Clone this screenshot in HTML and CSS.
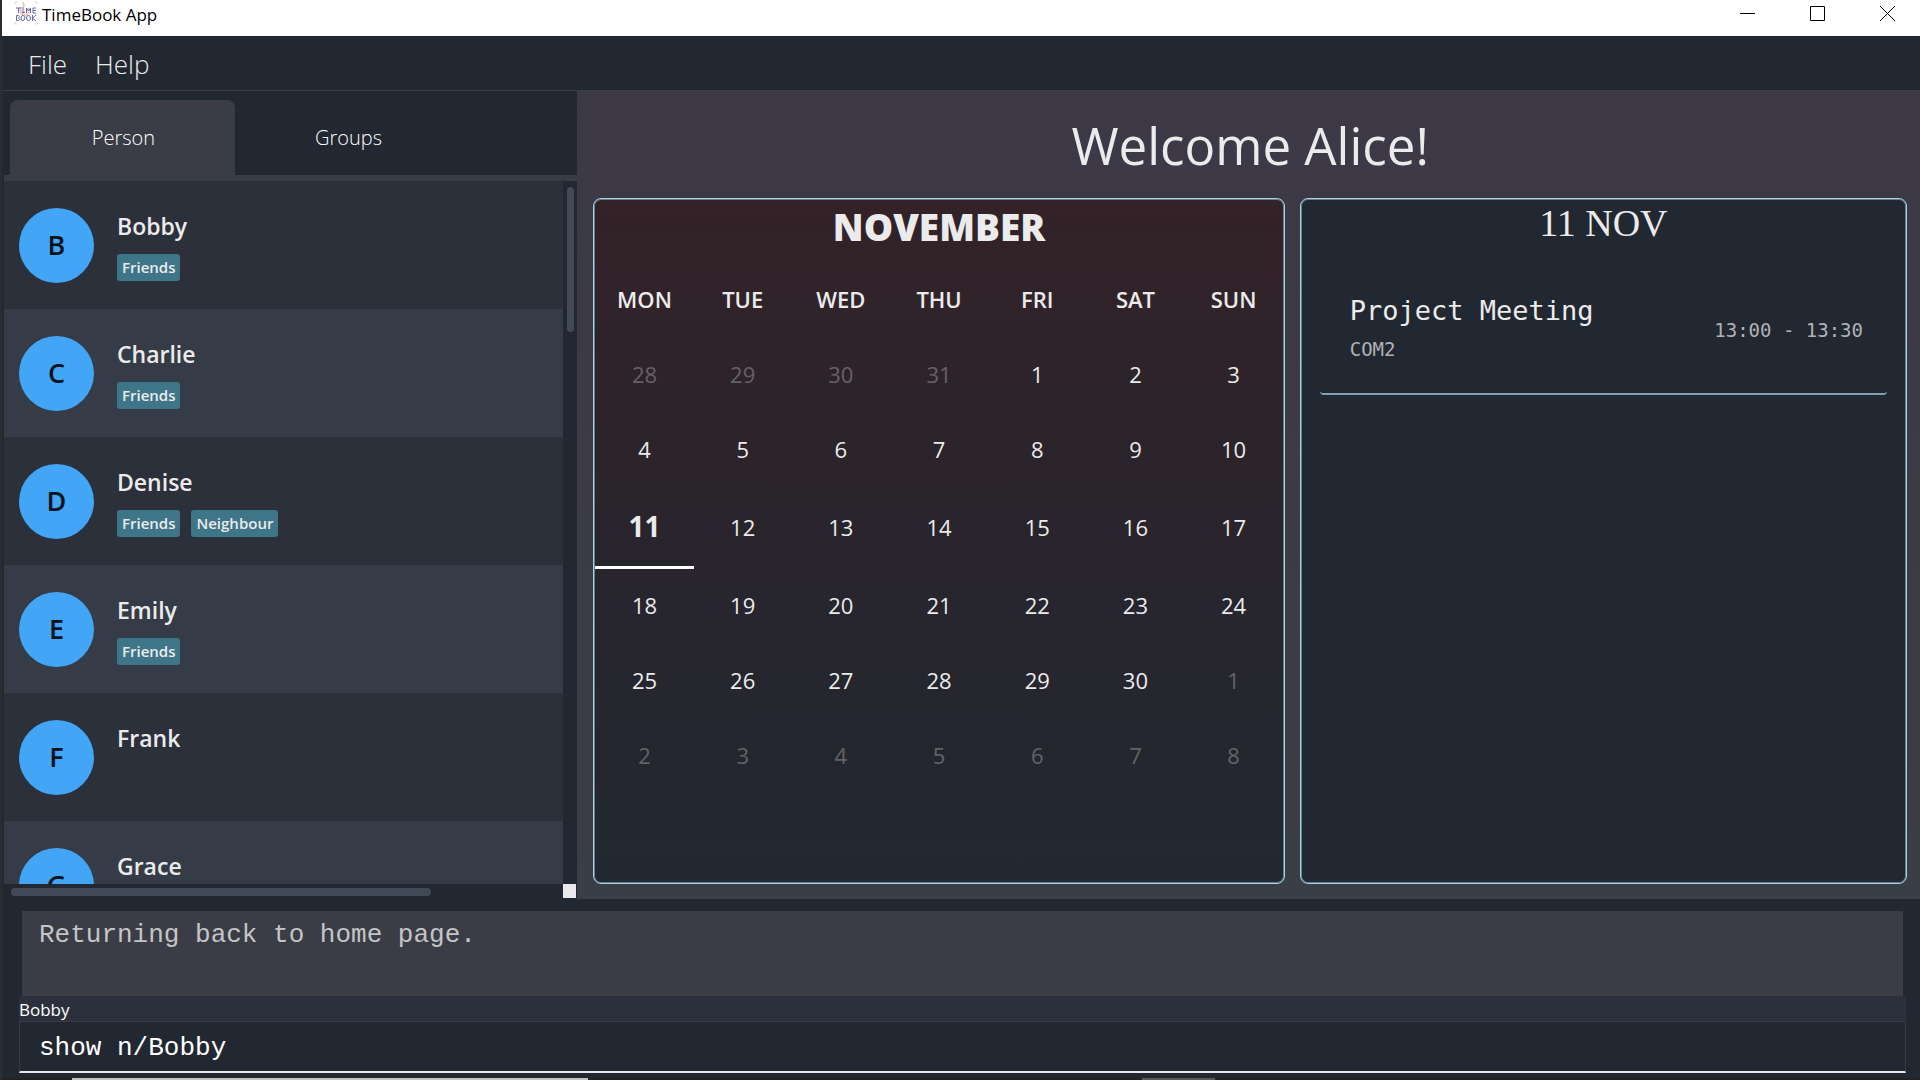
FILE: index.html
```html
<!DOCTYPE html>
<html lang="en">
<head>
<meta charset="utf-8">
<title>TimeBook App</title>
<link rel="stylesheet" href="styles.css">
</head>
<body>
<header class="titlebar">
  <svg class="logo" viewBox="0 0 24 28" width="24" height="28" aria-hidden="true">
    <path d="M1 4V2h2M21 2h2v2M1 22v2h2M21 24h2v-2" fill="none" stroke="#d4d4da"/>
    <path d="M7 7c-2 5 1 8 4 8s5-3 3-7M9 2l1 5" fill="none" stroke="#f3c9b0" stroke-width="2"/>
    <path d="M2 8h5M4.500 8v5M9 7v6M8 12.500h3M12.500 13V8l2 3 2-3v5M22 8h-3v5h3M19 10.500h3" fill="none" stroke="#6767b4"/>
    <path d="M2.500 15.500v5h2q2.500-1.200 0-2.500 1.500-1.300 0-2.500zM18.500 15v6M22 15l-3.500 3 3.500 3" fill="none" stroke="#6767b4"/>
    <ellipse cx="9" cy="18" rx="2" ry="2.500" fill="none" stroke="#6767b4"/>
    <ellipse cx="14.500" cy="18" rx="2" ry="2.500" fill="none" stroke="#6767b4"/>
  </svg>
  <h1 class="app-name">TimeBook App</h1>
  <div class="window-buttons">
    <button class="window-button" type="button" aria-label="Minimize"><svg width="15" height="15" viewBox="0 0 15 15"><path d="M0 7.500h15" stroke="#000"/></svg></button>
    <button class="window-button" type="button" aria-label="Maximize"><svg width="15" height="15" viewBox="0 0 15 15"><path d="M.5.5h14v14H.5z" fill="none" stroke="#000"/></svg></button>
    <button class="window-button" type="button" aria-label="Close"><svg width="15" height="15" viewBox="0 0 15 15"><path d="M0 0l15 15M15 0L0 15" stroke="#000"/></svg></button>
  </div>
</header>
<nav class="menubar">
  <button class="menu" type="button">File</button>
  <button class="menu" type="button">Help</button>
</nav>
<main class="workspace">
  <section class="sidebar">
    <div class="tabs" role="tablist">
      <button class="tab tab-selected" type="button" role="tab" aria-selected="true">Person</button>
      <button class="tab" type="button" role="tab" aria-selected="false">Groups</button>
    </div>
    <div class="list-pane">
      <ul class="people">
        <li class="person"><span class="avatar">B</span><div class="details"><span class="name">Bobby</span><div class="tags"><span class="tag">Friends</span></div></div></li>
        <li class="person"><span class="avatar">C</span><div class="details"><span class="name">Charlie</span><div class="tags"><span class="tag">Friends</span></div></div></li>
        <li class="person"><span class="avatar">D</span><div class="details"><span class="name">Denise</span><div class="tags"><span class="tag">Friends</span><span class="tag">Neighbour</span></div></div></li>
        <li class="person"><span class="avatar">E</span><div class="details"><span class="name">Emily</span><div class="tags"><span class="tag">Friends</span></div></div></li>
        <li class="person"><span class="avatar">F</span><div class="details"><span class="name">Frank</span></div></li>
        <li class="person"><span class="avatar">G</span><div class="details"><span class="name">Grace</span></div></li>
      </ul>
      <div class="scroll-y"><div class="thumb-y"></div></div>
      <div class="scroll-x"><div class="thumb-x"></div></div>
      <div class="scroll-corner"></div>
    </div>
  </section>
  <section class="home">
    <h2 class="welcome">Welcome Alice!</h2>
    <div class="panels">
      <section class="panel calendar">
        <h3 class="month">NOVEMBER</h3>
        <table class="days">
          <thead><tr><th>MON</th><th>TUE</th><th>WED</th><th>THU</th><th>FRI</th><th>SAT</th><th>SUN</th></tr></thead>
          <tbody>
            <tr><td class="other">28</td><td class="other">29</td><td class="other">30</td><td class="other">31</td><td>1</td><td>2</td><td>3</td></tr>
            <tr><td>4</td><td>5</td><td>6</td><td>7</td><td>8</td><td>9</td><td>10</td></tr>
            <tr class="this-week"><td class="today">11</td><td>12</td><td>13</td><td>14</td><td>15</td><td>16</td><td>17</td></tr>
            <tr><td>18</td><td>19</td><td>20</td><td>21</td><td>22</td><td>23</td><td>24</td></tr>
            <tr><td>25</td><td>26</td><td>27</td><td>28</td><td>29</td><td>30</td><td class="other">1</td></tr>
            <tr><td class="other">2</td><td class="other">3</td><td class="other">4</td><td class="other">5</td><td class="other">6</td><td class="other">7</td><td class="other">8</td></tr>
          </tbody>
        </table>
      </section>
      <section class="panel agenda">
        <h3 class="date">11 NOV</h3>
        <article class="event">
          <div class="event-info">
            <h4 class="event-title">Project Meeting</h4>
            <p class="event-place">COM2</p>
          </div>
          <time class="event-time">13:00 - 13:30</time>
        </article>
      </section>
    </div>
  </section>
</main>
<footer class="console">
  <output class="result">Returning back to home page.</output>
  <label class="suggestion" for="command">Bobby</label>
  <input class="command" id="command" type="text" value="show n/Bobby" spellcheck="false" autocomplete="off">
</footer>
<div class="taskbar"><span class="task task-active"></span><span class="task"></span></div>
</body>
</html>
```
FILE: styles.css
```css
* { box-sizing: border-box; }

body {
  margin: 0;
  height: 100vh;
  display: flex;
  flex-direction: column;
  padding-left: 2px;
  overflow: hidden;
  background: #222831;
  box-shadow: inset 2px 0 #2b2e31;
  color: #ebebeb;
  font-family: "Open Sans", "Noto Sans", sans-serif;
}

h1, h2, h3, h4, p, ul { margin: 0; padding: 0; font-weight: 400; }
ul { list-style: none; }
button { font: inherit; color: inherit; background: none; border: 0; padding: 0; }

.titlebar {
  display: flex;
  align-items: flex-start;
  height: 36px;
  padding: 0 25px 0 12px;
  background: #fff;
  color: #000;
}
.app-name { margin-left: 4px; font-size: 17px; line-height: 30px; }
.window-buttons { display: flex; gap: 55px; margin-left: auto; }
.window-button { width: 15px; height: 27px; }
.window-button svg { display: block; }

.menubar {
  display: flex;
  gap: 28px;
  height: 55px;
  padding: 0 26px;
  border-bottom: 1px solid #3a3f49;
}
.menu { font-size: 26px; font-weight: 300; line-height: 56px; }

.workspace {
  flex: 1;
  min-height: 0;
  display: grid;
  grid-template-columns: 3fr 7fr;
}

.sidebar { display: flex; flex-direction: column; min-height: 0; padding-left: 2px; }
.tabs {
  display: flex;
  height: 90px;
  padding: 9px 6px 0;
  border-bottom: 6px solid #393e46;
}
.tab { width: 225px; padding-left: 2px; border-radius: 8px 8px 0 0; font-size: 20px; font-weight: 300; color: #fff; }
.tab-selected { background: #3a3d45; }

.list-pane {
  flex: 1;
  min-height: 0;
  display: grid;
  grid-template: minmax(0, 1fr) 14px / minmax(0, 1fr) 14px;
  margin-bottom: 1px;
}
.people { overflow: hidden; }
.person { display: flex; gap: 23px; height: 128px; padding: 27px 15px 0; background: #2b303b; }
.person:nth-child(even) { background: #363c47; }
.avatar {
  width: 75px;
  height: 75px;
  border-radius: 50%;
  background: #42a5f5;
  color: #07111b;
  font-size: 27px;
  font-weight: 600;
  line-height: 74px;
  text-align: center;
}
.name { display: block; font-size: 23px; font-weight: 600; line-height: 36px; }
.tags { display: flex; gap: 11px; margin-top: 10px; }
.tag { padding: 0 5px; border-radius: 3px; background: #3e7588; font-size: 15px; font-weight: 600; line-height: 27px; }
.scroll-y { padding: 6px 3px 0 4px; }
.thumb-y { height: 145px; border-radius: 4px; background: #414a56; }
.scroll-x { padding: 4px 0 0 7px; }
.thumb-x { width: 76%; height: 8px; border-radius: 4px; background: #414a56; }
.scroll-corner { background: #e9e9e9; margin-right: 1px; }

.home {
  display: flex;
  flex-direction: column;
  padding: 18px 13px 15px 16px;
  background: linear-gradient(#3d3846, #3a3e46);
}
.welcome { font-size: 51px; line-height: 72px; margin-bottom: 17px; text-align: center; }
.panels { flex: 1; display: grid; grid-template-columns: 691fr 607fr; gap: 15px; }
.panel {
  border: 1px solid #a6d3e2;
  border-radius: 8px;
  box-shadow: inset 0 0 0 1px #667f8a;
  background: #222831;
}
.calendar { padding: 0 1px; background: linear-gradient(#332228, #27252d 60%, #222831); }
.month { font-size: 37px; font-weight: 800; line-height: 56px; text-align: center; }
.days { width: 100%; margin-top: 6px; table-layout: fixed; border-collapse: collapse; font-size: 22px; }
.days th, .days td { height: 75px; padding: 0; font-weight: 400; text-align: center; }
.days th { font-weight: 600; }
.days .other { color: #646267; }
.days .this-week td { height: 81px; }
.days .today { border-bottom: 3px solid #fff; font-size: 28px; font-weight: 700; }

.agenda { padding: 0 19px; }
.date { font-family: "Liberation Serif", serif; font-size: 38px; line-height: 48px; text-align: center; }
.event {
  display: flex;
  align-items: center;
  height: 136px;
  margin-top: 12px;
  padding: 8px 24px 0 30px;
  border-bottom: 2px solid #7ba3b1;
  border-radius: 4px;
  font-family: "DejaVu Sans Mono", monospace;
}
.event-info { flex: 1; }
.event-title { font-size: 27px; line-height: 38px; }
.event-place { font-size: 19px; line-height: 38px; color: #b0b2b5; }
.event-time { font-size: 19px; color: #b0b2b5; }

.console { display: flex; flex-direction: column; padding: 12px 14px 5px 17px; }
.result, .command { font-family: "Liberation Mono", monospace; font-size: 26px; }
.result {
  height: 85px;
  margin: 0 3px;
  padding: 6px 17px;
  background: #3a3d45;
  line-height: 36px;
  color: #c4c5c7;
}
.suggestion { height: 25px; background: #2b303c; font-size: 17px; line-height: 28px; color: #fff; }
.command {
  height: 52px;
  padding: 2px 19px 0;
  border: 1px solid #383c45;
  border-bottom: 2px solid #e8e8e8;
  background: #222831;
  color: #fff;
  outline: 0;
}

.taskbar { display: flex; gap: 554px; height: 2px; padding-left: 70px; background: #232323; }
.task { width: 73px; background: #5a5a5a; }
.task-active { width: 516px; background: #c2c2c2; }
```
